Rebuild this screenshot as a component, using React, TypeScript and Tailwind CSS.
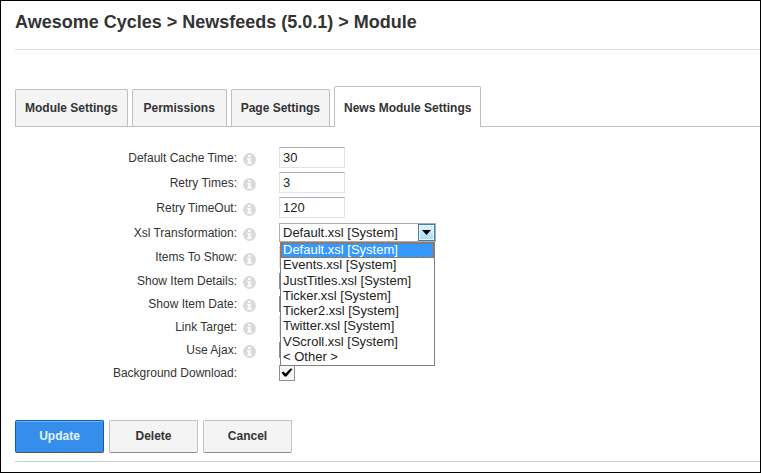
import { useState } from "react";

const tabs = ["Module Settings", "Permissions", "Page Settings", "News Module Settings"];

const transformations = [
  "Default.xsl [System]",
  "Events.xsl [System]",
  "JustTitles.xsl [System]",
  "Ticker.xsl [System]",
  "Ticker2.xsl [System]",
  "Twitter.xsl [System]",
  "VScroll.xsl [System]",
  "< Other >",
];

function InfoIcon() {
  return (
    <svg viewBox="0 0 13 13" className="mt-1 block size-[13px] shrink-0" aria-hidden="true">
      <circle cx="6.5" cy="6.5" r="6.5" fill="#dadada" />
      <path d="M5.200 2h2.400v2H5.200zM4.300 5h3.300v4.300h1.200v1.500H4.300V9.300h1V6.500h-1z" fill="#fff" />
    </svg>
  );
}

const rowHeights = {
  tall: "h-[25px]",
  medium: "h-[24px]",
  short: "h-[23px]",
};

type RowProps = {
  id: string;
  label: string;
  size?: keyof typeof rowHeights;
  info?: boolean;
  children: React.ReactNode;
};

function Row({ id, label, size = "short", info = true, children }: RowProps) {
  return (
    <div className={`flex items-center ${rowHeights[size]}`}>
      <label htmlFor={id} className="w-[222px] shrink-0 text-right text-[12px] leading-4">
        {label}
      </label>
      <span className="flex w-[42px] shrink-0 pl-[6px]">{info && <InfoIcon />}</span>
      {children}
    </div>
  );
}

function TextField({ id, value }: { id: string; value: string }) {
  return (
    <input
      id={id}
      type="text"
      defaultValue={value}
      className="h-[21px] w-[66px] border border-[#e2e3ea] border-t-[#abadb3] bg-white px-[3px] text-[13px] leading-4 text-[#222] outline-none"
    />
  );
}

function CheckField({ id, checked = false }: { id: string; checked?: boolean }) {
  return (
    <span className="relative flex size-4">
      <input
        id={id}
        type="checkbox"
        defaultChecked={checked}
        className="peer size-4 appearance-none border border-[#8e8f8f] bg-[#f6f6f6]"
      />
      <svg
        viewBox="0 0 16 16"
        className="pointer-events-none absolute inset-0 hidden size-4 peer-checked:block"
        aria-hidden="true"
      >
        <path d="M2.500 7.500 L4.500 6.500 L6.500 8.500 L11.500 3.500 L13.500 4 L7.500 11.500 H5.500 Z" fill="#000" />
      </svg>
    </span>
  );
}

function TransformationField({ id }: { id: string }) {
  const [value, setValue] = useState(transformations[0]);
  return (
    <div className="relative h-[19px] w-[157px]">
      <select
        id={id}
        value={value}
        onChange={(e) => setValue(e.target.value)}
        className="block h-full w-full appearance-none border border-[#abadb3] bg-white pl-[3px] text-[13px] leading-4 text-[#222] outline-none"
      >
        {transformations.map((t) => (
          <option key={t}>{t}</option>
        ))}
      </select>
      <span className="pointer-events-none absolute inset-y-px right-px flex w-[17px] items-center justify-center border border-[#3c7fb1] bg-linear-to-b from-[#e5f4fc] to-[#a5d8f3] shadow-[inset_0_0_0_1px_#e8f6fd]">
        <svg viewBox="0 0 9 5" className="h-[5px] w-[9px]" aria-hidden="true">
          <path d="M0 0H9L4.500 5Z" fill="#000" />
        </svg>
      </span>
      <ul
        role="listbox"
        aria-label="Xsl Transformation options"
        className="absolute top-full left-px z-10 flex h-[124px] w-[155px] flex-col border border-[#7f7f8c] bg-white text-[13px] text-[#222]"
      >
        {transformations.map((t) => (
          <li
            key={t}
            role="option"
            aria-selected={t === value}
            onClick={() => setValue(t)}
            className={`flex flex-1 items-center border border-dashed px-px pb-[2px] leading-[11px] ${
              t === value ? "border-[#cc6600] bg-[#3399ff] text-white" : "border-transparent"
            }`}
          >
            {t}
          </li>
        ))}
      </ul>
    </div>
  );
}

export default function App() {
  return (
    <main className="min-h-screen border border-black bg-white pl-[14px] font-['Liberation_Sans',Arial,sans-serif] text-[#333]">
      <h1 className="h-12 pt-[9px] text-[18px] leading-6 font-bold">
        Awesome Cycles &gt; Newsfeeds (5.0.1) &gt; Module
      </h1>
      <div className="border-t border-[#ddd]" />

      <div role="tablist" className="mt-9 flex items-end gap-1 border-b border-[#bfbfbf]">
        {tabs.map((tab, i) => {
          const active = i === tabs.length - 1;
          return (
            <button
              key={tab}
              type="button"
              role="tab"
              aria-selected={active}
              className={`min-w-[95px] rounded-t-[2px] border border-b-0 border-[#bfbfbf] px-[9px] text-[12px] leading-4 font-bold ${
                active ? "-mb-px h-[41px] bg-white pt-px" : "h-[37px] bg-[#f4f4f4]"
              }`}
            >
              {tab}
            </button>
          );
        })}
      </div>

      <form onSubmit={(e) => e.preventDefault()}>
        <div className="pt-[18px]">
          <Row id="cache" label="Default Cache Time:" size="tall">
            <TextField id="cache" value="30" />
          </Row>
          <Row id="retries" label="Retry Times:" size="tall">
            <TextField id="retries" value="3" />
          </Row>
          <Row id="timeout" label="Retry TimeOut:" size="tall">
            <TextField id="timeout" value="120" />
          </Row>
          <Row id="xsl" label="Xsl Transformation:" size="tall">
            <TransformationField id="xsl" />
          </Row>
          <Row id="items" label="Items To Show:" size="medium">
            <TextField id="items" value="" />
          </Row>
          <Row id="details" label="Show Item Details:">
            <CheckField id="details" />
          </Row>
          <Row id="date" label="Show Item Date:">
            <CheckField id="date" />
          </Row>
          <Row id="target" label="Link Target:">
            <TextField id="target" value="" />
          </Row>
          <Row id="ajax" label="Use Ajax:">
            <CheckField id="ajax" />
          </Row>
          <Row id="background" label="Background Download:" info={false}>
            <CheckField id="background" checked />
          </Row>
        </div>

        <div className="mt-9 flex gap-[5px] text-[12px] leading-4 font-bold">
          <button
            type="submit"
            className="h-[33px] w-[89px] rounded-[2px] border border-[#0c5fb4] border-b-[#555] bg-[#358fea] pb-[2px] text-[#e6f2fe] shadow-[inset_0_1px_0_#6db3f5]"
          >
            Update
          </button>
          <button
            type="button"
            className="h-[33px] w-[89px] rounded-[2px] border border-[#c2c2c2] border-b-[#8c8c8c] bg-[#f4f4f4] pb-[2px]"
          >
            Delete
          </button>
          <button
            type="button"
            className="h-[33px] w-[89px] rounded-[2px] border border-[#c2c2c2] border-b-[#8c8c8c] bg-[#f4f4f4] pb-[2px]"
          >
            Cancel
          </button>
        </div>
        <div className="mt-2 border-t border-[#ccc]" />
      </form>
    </main>
  );
}
